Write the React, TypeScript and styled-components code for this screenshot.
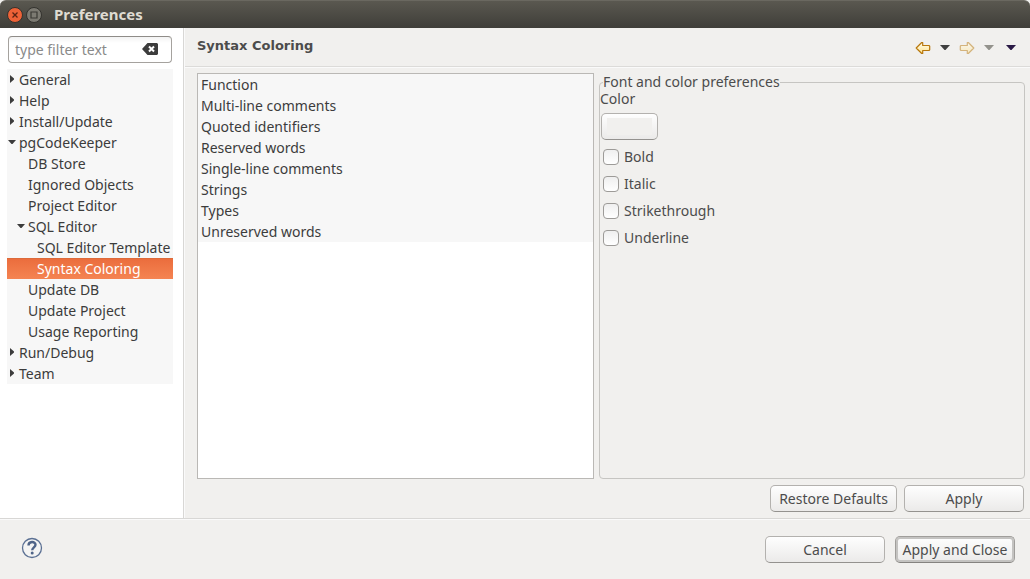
import React, { useState } from "react";
import styled, { createGlobalStyle, css } from "styled-components";

const GlobalStyle = createGlobalStyle`
  *, *::before, *::after { box-sizing: border-box; }
  body {
    margin: 0;
    background: #f1f0ee;
    color: #4c4c4c;
    font: 14px/21px "Noto Sans", "Open Sans", sans-serif;
  }
  button, input { font: inherit; color: inherit; }
`;

const Window = styled.div`
  display: flex;
  flex-direction: column;
  min-height: 100vh;
`;

const TitleBar = styled.header`
  display: flex;
  align-items: center;
  gap: 3px;
  height: 28px;
  padding: 0 7px;
  border-top: 1px solid #6a6860;
  border-radius: 6px 6px 0 0;
  background: linear-gradient(#5a5850, #3f3e39);
`;

const Title = styled.h1`
  margin: 0 0 0 9px;
  font-size: 15px;
  font-weight: 700;
  color: #dfdbd2;
`;

const WindowButton = styled.button`
  display: flex;
  width: 16px;
  height: 16px;
  padding: 0;
  border: 0;
  background: none;
`;

const Body = styled.div`
  display: flex;
  flex: 1;
`;

const Sidebar = styled.nav`
  flex: none;
  width: 184px;
  padding: 8px 10px 0 7px;
  border-right: 1px solid #d8d7d5;
  background: #fff;
`;

const Filter = styled.div`
  display: flex;
  align-items: center;
  height: 27px;
  margin: 0 1px 6px;
  padding: 0 13px 0 6px;
  border: 1px solid #a5a29e;
  border-top-color: #8f8c88;
  border-radius: 4px;
  background: linear-gradient(#f3f3f3, #fff 6px);
`;

const FilterInput = styled.input`
  flex: 1;
  min-width: 0;
  height: 24px;
  padding: 0;
  border: 0;
  outline: 0;
  background: none;
  &::placeholder { color: #8a8a8a; opacity: 1; }
`;

const ClearButton = styled.button`
  display: flex;
  padding: 0 0 2px;
  border: 0;
  background: none;
`;

const Tree = styled.ul`
  margin: 0;
  padding: 0;
  list-style: none;
  background: #f7f7f7;
  color: #3c3c3c;
`;

const TreeRow = styled.li<{ $level: number; $selected?: boolean }>`
  display: flex;
  align-items: center;
  height: 21px;
  padding-left: ${(p) => p.$level * 9}px;
  overflow: hidden;
  white-space: nowrap;
  ${(p) =>
    p.$selected &&
    css`
      color: #fff;
      background: linear-gradient(#ea6c3c, #f58452);
      box-shadow: inset 0 1px #dd6a3a;
    `}
`;

const Expander = styled.span`
  display: flex;
  flex: none;
  width: 12px;
`;

const Main = styled.main`
  display: flex;
  flex: 1;
  flex-direction: column;
  min-width: 0;
  border-left: 1px solid #fafafa;
`;

const PageHeader = styled.div`
  display: flex;
  align-items: center;
  justify-content: space-between;
  height: 39px;
  padding: 0 8px 0 12px;
  border-bottom: 1px solid #dcdbd9;
  box-shadow: 0 1px #fafafa;
`;

const PageTitle = styled.h2`
  margin: 0;
  padding-bottom: 4px;
  font: bold 13px/17px "DejaVu Sans", sans-serif;
`;

const Tools = styled.div`
  display: flex;
  align-items: center;
  padding-top: 1px;
`;

const ToolButton = styled.button<{ $width: number }>`
  display: flex;
  justify-content: center;
  width: ${(p) => p.$width}px;
  padding: 0;
  border: 0;
  background: none;
`;

const Panels = styled.div`
  display: grid;
  flex: 1;
  grid-template-columns: 397fr 426fr;
  gap: 5px;
  padding: 6px 5px 0 12px;
`;

const List = styled.ul`
  margin: 0;
  padding: 0;
  border: 1px solid #bab8b5;
  list-style: none;
  background: #fff;
  color: #3c3c3c;
`;

const ListItem = styled.li`
  height: 21px;
  padding-left: 3px;
  background: #f7f7f7;
`;

const Group = styled.fieldset`
  min-width: 0;
  margin: 0;
  padding: 0;
  border: 1px solid #c6c5c2;
  border-radius: 4px;
`;

const Legend = styled.legend`
  height: 18px;
  margin-left: 3px;
  padding: 0;
  line-height: 18px;
`;

const ColorLabel = styled.label`
  display: block;
  line-height: 16px;
`;

const buttonFace = css`
  height: 27px;
  padding: 0;
  border: 1px solid #b3b1ae;
  border-bottom-color: #94928f;
  border-radius: 5px;
  background: linear-gradient(#fefefe, #ebeae9);
`;

const ColorButton = styled.button`
  ${buttonFace}
  display: block;
  width: 57px;
  margin: 6px 1px 3px;
  padding: 4px 5px;
`;

const Swatch = styled.span`
  display: block;
  height: 17px;
  background: #f1f0ee;
`;

const CheckRow = styled.label`
  display: flex;
  align-items: center;
  gap: 5px;
  height: 27px;
  padding-left: 3px;
`;

const CheckBox = styled.input`
  appearance: none;
  width: 16px;
  height: 16px;
  margin: 0;
  border: 1px solid #9d9b98;
  border-radius: 4px;
  background: linear-gradient(#efefef, #fff);
  &:checked { background: #ea6c3c; }
`;

const PageActions = styled.div`
  display: flex;
  justify-content: flex-end;
  gap: 7px;
  padding: 6px 6px;
`;

const Button = styled.button<{ $width: number; $default?: boolean }>`
  ${buttonFace}
  width: ${(p) => p.$width}px;
  white-space: nowrap;
  ${(p) =>
    p.$default &&
    css`
      border-color: #a09e9b;
      border-bottom-color: #858380;
      box-shadow: inset 0 0 0 2px #c4c3c1;
    `}
`;

const Footer = styled.footer`
  display: flex;
  align-items: center;
  gap: 10px;
  height: 61px;
  padding: 0 15px 0 21px;
  border-top: 1px solid #d8d7d5;
  box-shadow: inset 0 1px #fafafa;
`;

const HelpButton = styled.button`
  display: flex;
  margin-right: auto;
  padding: 0 0 2px;
  border: 0;
  background: none;
`;

const Caret = ({ fill }: { fill: string }) => (
  <svg width="10" height="5" viewBox="0 0 10 5" aria-hidden="true">
    <path d="M0 0h10L5.5 5h-1z" fill={fill} />
  </svg>
);

const Arrow = ({ forward = false }: { forward?: boolean }) => (
  <svg width="16" height="14" viewBox="0 0 16 14" aria-hidden="true" opacity={forward ? 0.5 : 1}>
    <defs>
      <linearGradient id={forward ? "fwd" : "back"} x1="0" y1="0" x2="0" y2="1">
        <stop offset="0" stopColor="#fffdf0" />
        <stop offset="1" stopColor="#ffe28a" />
      </linearGradient>
    </defs>
    <path
      transform={forward ? "translate(16 0) scale(-1 1)" : undefined}
      d="M1.200 7 6.700 1.500h1V4.500H14l.7.7v3.600l-.7.7H7.700V12.500h-1z"
      fill={`url(#${forward ? "fwd" : "back"})`}
      stroke="#b8770c"
      strokeWidth="1.200"
      strokeLinejoin="round"
    />
  </svg>
);

const Triangle = ({ open }: { open: boolean }) =>
  open ? (
    <svg width="9" height="5" viewBox="0 0 9 5" aria-hidden="true">
      <path d="M1 0h8L5.500 4h-1z" fill="#3c3c3c" />
    </svg>
  ) : (
    <svg width="8" height="9" viewBox="0 0 8 9" aria-hidden="true">
      <path d="M3 0v8l4-3.500v-1z" fill="#3c3c3c" />
    </svg>
  );

type Node = { label: string; level: number; open?: boolean; selected?: boolean };

const nodes: Node[] = [
  { label: "General", level: 0, open: false },
  { label: "Help", level: 0, open: false },
  { label: "Install/Update", level: 0, open: false },
  { label: "pgCodeKeeper", level: 0, open: true },
  { label: "DB Store", level: 1 },
  { label: "Ignored Objects", level: 1 },
  { label: "Project Editor", level: 1 },
  { label: "SQL Editor", level: 1, open: true },
  { label: "SQL Editor Template", level: 2 },
  { label: "Syntax Coloring", level: 2, selected: true },
  { label: "Update DB", level: 1 },
  { label: "Update Project", level: 1 },
  { label: "Usage Reporting", level: 1 },
  { label: "Run/Debug", level: 0, open: false },
  { label: "Team", level: 0, open: false },
];

const elements = [
  "Function",
  "Multi-line comments",
  "Quoted identifiers",
  "Reserved words",
  "Single-line comments",
  "Strings",
  "Types",
  "Unreserved words",
];

const styles = ["Bold", "Italic", "Strikethrough", "Underline"];

export default function App() {
  const [filter, setFilter] = useState("");

  return (
    <Window>
      <GlobalStyle />
      <TitleBar>
        <WindowButton aria-label="Close">
          <svg width="16" height="16" viewBox="0 0 16 16">
            <circle cx="8" cy="8" r="7.500" fill="#ee6237" stroke="#33322e" />
            <path d="M5.500 5.500l5 5m0-5l-5 5" stroke="#5b2413" strokeWidth="1.300" />
          </svg>
        </WindowButton>
        <WindowButton aria-label="Maximize">
          <svg width="16" height="16" viewBox="0 0 16 16">
            <circle cx="8" cy="8" r="7.500" fill="#7c7a72" stroke="#33322e" />
            <path d="M5 5h6v6H5z" fill="none" stroke="#3a3934" strokeWidth="1.200" />
          </svg>
        </WindowButton>
        <Title>Preferences</Title>
      </TitleBar>

      <Body>
        <Sidebar>
          <Filter>
            <FilterInput
              aria-label="Filter"
              placeholder="type filter text"
              value={filter}
              onChange={(e) => setFilter(e.target.value)}
            />
            <ClearButton aria-label="Clear filter" onClick={() => setFilter("")}>
              <svg width="16" height="12" viewBox="0 0 16 12">
                <path d="M0 6 5.500 0H15l1 1v10l-1 1H5.500z" fill="#3c3c3c" />
                <path d="M7 3.500l5 5m0-5l-5 5" stroke="#fff" strokeWidth="2" />
              </svg>
            </ClearButton>
          </Filter>
          <Tree>
            {nodes.map((n) => (
              <TreeRow key={n.label} $level={n.level} $selected={n.selected}>
                <Expander>{n.open !== undefined && <Triangle open={n.open} />}</Expander>
                {n.label}
              </TreeRow>
            ))}
          </Tree>
        </Sidebar>

        <Main>
          <PageHeader>
            <PageTitle>Syntax Coloring</PageTitle>
            <Tools>
              <ToolButton $width={22} aria-label="Back"><Arrow /></ToolButton>
              <ToolButton $width={22} aria-label="Back history"><Caret fill="#3f3f3f" /></ToolButton>
              <ToolButton $width={22} aria-label="Forward"><Arrow forward /></ToolButton>
              <ToolButton $width={22} aria-label="Forward history"><Caret fill="#93928c" /></ToolButton>
              <ToolButton $width={22} aria-label="Menu"><Caret fill="#2a1a45" /></ToolButton>
            </Tools>
          </PageHeader>
          <Panels>
            <List>
              {elements.map((e) => (
                <ListItem key={e}>{e}</ListItem>
              ))}
            </List>
            <Group>
              <Legend>Font and color preferences</Legend>
              <ColorLabel htmlFor="color">Color</ColorLabel>
              <ColorButton id="color">
                <Swatch />
              </ColorButton>
              {styles.map((s) => (
                <CheckRow key={s}>
                  <CheckBox type="checkbox" />
                  {s}
                </CheckRow>
              ))}
            </Group>
          </Panels>
          <PageActions>
            <Button $width={127}>Restore Defaults</Button>
            <Button $width={120}>Apply</Button>
          </PageActions>
        </Main>
      </Body>

      <Footer>
        <HelpButton aria-label="Help">
          <svg width="22" height="22" viewBox="0 0 22 22">
            <circle cx="11" cy="11" r="9.500" fill="#f4f4f3" stroke="#5b7093" strokeWidth="1.300" />
            <path
              d="M7.500 8.500C7.500 4 14.500 4 14.500 7.800 14.500 10.300 11.200 10.500 11.200 13.300"
              fill="none"
              stroke="#4f6488"
              strokeWidth="2.400"
            />
            <circle cx="11.200" cy="16" r="1.500" fill="#4f6488" />
          </svg>
        </HelpButton>
        <Button $width={120}>Cancel</Button>
        <Button $width={120} $default>Apply and Close</Button>
      </Footer>
    </Window>
  );
}
